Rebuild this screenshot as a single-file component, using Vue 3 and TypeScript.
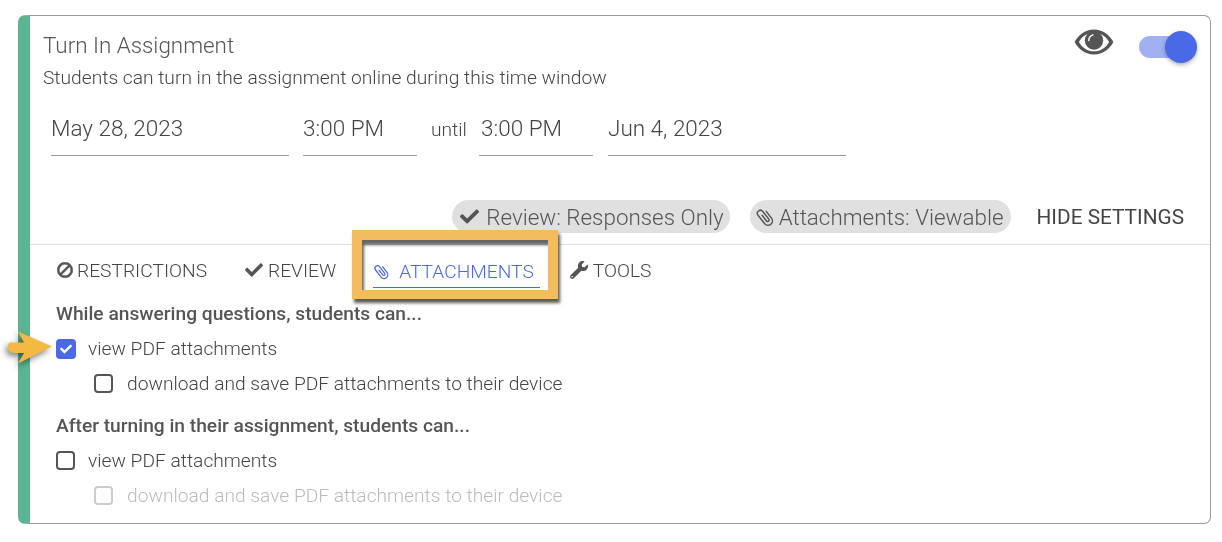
<script setup lang="ts">
import { ref } from 'vue'

type Icon = { box: string; d: string }

const icons: Record<string, Icon> = {
  check: {
    box: '0 0 512 512',
    d: 'M173.898 439.404l-166.4-166.4c-9.997-9.997-9.997-26.206 0-36.204l36.203-36.204c9.997-9.998 26.207-9.998 36.204 0L192 312.69 432.095 72.596c9.997-9.997 26.207-9.997 36.204 0l36.203 36.204c9.997 9.997 9.997 26.206 0 36.204l-294.4 294.401c-9.998 9.997-26.207 9.997-36.204-.001z'
  },
  ban: {
    box: '0 0 512 512',
    d: 'M256 8C119.034 8 8 119.033 8 256s111.034 248 248 248 248-111.034 248-248S392.967 8 256 8zm130.108 117.892c65.448 65.448 70 165.481 20.677 235.637L150.47 105.216c70.204-49.356 170.226-44.735 235.638 20.676zM125.892 386.108c-65.448-65.448-70-165.481-20.677-235.637L361.53 406.784c-70.203 49.356-170.226 44.736-235.638-20.676z'
  },
  wrench: {
    box: '0 0 512 512',
    d: 'M507.73 109.1c-2.24-9.03-13.54-12.09-20.12-5.51l-74.36 74.36-67.88-11.31-11.31-67.88 74.36-74.36c6.62-6.62 3.43-17.9-5.66-20.16-47.38-11.74-99.55.91-136.58 37.93-39.64 39.64-50.55 97.1-34.05 147.2L18.74 402.76c-24.99 24.99-24.99 65.51 0 90.5 24.99 24.99 65.51 24.99 90.5 0l213.21-213.21c50.12 16.71 107.47 5.68 147.37-34.22 37.07-37.07 49.7-89.32 37.91-136.73zM64 472c-13.25 0-24-10.75-24-24 0-13.26 10.75-24 24-24s24 10.74 24 24c0 13.25-10.75 24-24 24z'
  }
}

// the paperclip leans the other way and is thinner than the solid set, so it is stroked
const clipPath = 'M14.200 6.500V14.600a4.200 4.200 0 0 1-8.400 0V4.600a2.900 2.900 0 0 1 5.800 0V13.800a1.400 1.400 0 0 1-2.800 0V7'

const enabled = ref(true)
const tabs = [
  { label: 'RESTRICTIONS', icon: 'ban' },
  { label: 'REVIEW', icon: 'check' },
  { label: 'ATTACHMENTS', icon: 'clip', active: true },
  { label: 'TOOLS', icon: 'wrench' }
]
const chips = [
  { label: 'Review: Responses Only', icon: 'check' },
  { label: 'Attachments: Viewable', icon: 'clip' }
]
</script>

<template>
  <div class="page">
    <div class="card">
      <div class="top">
        <div class="head">
          <div>
            <h2 class="title">Turn In Assignment</h2>
            <p class="sub">Students can turn in the assignment online during this time window</p>
          </div>
          <div class="head-tools">
            <svg class="eye" viewBox="0 0 40 26">
              <path
                fill-rule="evenodd"
                d="M20 .5C11.500.5 4.600 5.600.6 13c4 7.400 10.900 12.500 19.400 12.500S35.400 20.400 39.400 13C35.400 5.600 28.500.5 20 .5zM20 22.300C13.600 22.300 8 18.900 4.900 13 8 7.100 13.600 3.700 20 3.700s12 3.400 15.100 9.300C32 18.900 26.400 22.300 20 22.300z"
              />
              <circle cx="20" cy="11.500" r="9.200" />
              <path d="M14.800 11.500c0-2.800 1.700-4.900 4.200-5.600" fill="none" stroke="#fff" stroke-width="1.500" stroke-linecap="round" />
            </svg>
            <button class="switch" type="button" @click="enabled = !enabled">
              <span class="knob"></span>
            </button>
          </div>
        </div>

        <div class="dates">
          <div class="field date">May 28, 2023</div>
          <div class="field time">3:00 PM</div>
          <span class="until">until</span>
          <div class="field time">3:00 PM</div>
          <div class="field date end">Jun 4, 2023</div>
        </div>

        <div class="summary">
          <span v-for="c in chips" :key="c.label" class="chip" :class="c.icon">
            <svg v-if="c.icon === 'clip'" class="ico" viewBox="0.500 0.500 19 19">
              <path class="clip-line" :d="clipPath" transform="rotate(-38 10 10)" />
            </svg>
            <svg v-else class="ico" :viewBox="icons[c.icon].box"><path :d="icons[c.icon].d" /></svg>
            {{ c.label }}
          </span>
          <span class="hide">HIDE SETTINGS</span>
        </div>
      </div>

      <div class="settings">
        <div class="tabs">
          <div v-for="t in tabs" :key="t.label" class="tab" :class="{ active: t.active }">
            <svg v-if="t.icon === 'clip'" class="ico" viewBox="0.500 0.500 19 19">
              <path class="clip-line" :d="clipPath" transform="rotate(-38 10 10)" />
            </svg>
            <svg v-else class="ico" :class="t.icon" :viewBox="icons[t.icon].box"><path :d="icons[t.icon].d" /></svg>
            <span>{{ t.label }}</span>
            <!-- callout drawn over the active tab -->
            <div v-if="t.active" class="callout"></div>
          </div>
        </div>

        <h4 class="group first">While answering questions, students can...</h4>
        <div class="check-row">
          <span class="box on">
            <svg viewBox="0 0 512 512"><path :d="icons.check.d" /></svg>
          </span>
          view PDF attachments
          <svg class="arrow" viewBox="0 0 48 34">
            <path d="M4.500 11.500H18L12 .5 46 15.500 12 32.500 18 22H8Q2 22 2 15.500 2 11.500 4.500 11.500z" />
          </svg>
        </div>
        <div class="check-row nested"><span class="box"></span>download and save PDF attachments to their device</div>

        <h4 class="group">After turning in their assignment, students can...</h4>
        <div class="check-row"><span class="box"></span>view PDF attachments</div>
        <div class="check-row nested off"><span class="box"></span>download and save PDF attachments to their device</div>
      </div>
    </div>
  </div>
</template>

<style scoped>
.page {
  width: 1222px;
  height: 542px;
  padding: 15px 11px 18px 18px;
  box-sizing: border-box;
  background: #fff;
  font-family: Roboto, "Liberation Sans", sans-serif;
  color: #555;
  overflow: hidden;
}
.card {
  height: 509px;
  box-sizing: border-box;
  border: 1px solid #999;
  border-left: 12px solid #5cb592;
  border-radius: 7px;
  opacity: 0.999;
}
.top {
  height: 229px;
  padding: 0 26px 0 13px;
  box-sizing: border-box;
  border-bottom: 1px solid #ddd;
  display: flex;
  flex-direction: column;
}
.head {
  display: flex;
  justify-content: space-between;
}
.title {
  margin: 14px 0 0;
  font-size: 22.400px;
  line-height: 30px;
  font-weight: 300;
  color: #555;
}
.sub {
  margin: 7px 0 0;
  font-size: 19.200px;
  line-height: 22px;
  font-weight: 300;
  color: #444;
}
.head-tools {
  display: flex;
  align-items: flex-start;
  margin-right: -6px;
}
.eye {
  width: 40px;
  height: 26px;
  margin-top: 13px;
  fill: #555;
}
.switch {
  position: relative;
  width: 51px;
  height: 22px;
  margin: 20px 0 0 25px;
  padding: 0;
  border: 0;
  border-radius: 11px;
  background: #a0b0f2;
}
.knob {
  position: absolute;
  right: -7px;
  top: -5px;
  width: 32px;
  height: 32px;
  border-radius: 50%;
  background: #4a69e6;
  box-shadow: 0 2px 4px rgba(0, 0, 0, 0.3);
}
.dates {
  display: flex;
  align-items: flex-end;
  margin-top: 20px;
  font-size: 22.500px;
  font-weight: 300;
}
.field {
  height: 47px;
  line-height: 38px;
  box-sizing: border-box;
  border-bottom: 1px solid #999;
  color: #444;
}
.date {
  width: 238px;
  margin-left: 8px;
}
.date.end {
  margin-left: 15px;
}
.time {
  width: 114px;
  margin-left: 14px;
}
.until {
  width: 48px;
  height: 47px;
  margin-left: 14px;
  font-size: 19.200px;
  line-height: 42px;
  color: #444;
}
.until + .time {
  margin-left: 0;
  padding-left: 2px;
}
.summary {
  display: flex;
  align-items: center;
  justify-content: flex-end;
  margin-top: 44px;
  font-size: 22.400px;
  font-weight: 300;
}
.chip {
  display: inline-flex;
  align-items: center;
  height: 33px;
  padding: 0 6px 0 8px;
  gap: 7px;
  margin-right: 20px;
  border-radius: 17px;
  background: #e0e0e0;
  white-space: nowrap;
}
.chip .ico {
  width: 19px;
  height: 19px;
  fill: #555;
  stroke: #555;
}
.chip.clip {
  padding: 0 7px 0 5px;
  gap: 4px;
}
.chip.clip .ico {
  width: 20px;
  height: 20px;
  fill: none;
}
.hide {
  margin-left: 6px;
  font-size: 20.800px;
  font-weight: 400;
  color: #444;
}
.settings {
  padding-left: 26px;
}
.tabs {
  display: flex;
  height: 50px;
  align-items: flex-start;
  font-size: 19.200px;
  font-weight: 300;
}
.tab {
  position: relative;
  display: flex;
  align-items: center;
  gap: 5px;
  height: 26px;
  margin-top: 12px;
  color: #444;
  white-space: nowrap;
}
.tab .ico {
  width: 18px;
  height: 18px;
  fill: #555;
}
.tab .ico.ban {
  width: 16px;
  height: 16px;
  margin: 0 -1px 0 1px;
  transform: scaleX(-1);
  stroke: #555;
  stroke-width: 18;
}
.tab:nth-child(2) {
  margin-left: 38px;
}
.tab.active {
  margin-left: 37px;
  height: 28px;
  padding: 0 6px 2px 0;
  gap: 8px;
  color: #4a69e6;
  border-bottom: 1px solid #4a69e6;
}
.tab.active .ico {
  width: 17px;
  height: 17px;
  margin-right: 1px;
  fill: none;
  stroke: #4a69e6;
}
.tab:last-child {
  margin-left: 30px;
}
.clip-line {
  fill: none;
  stroke-width: 1.400;
  stroke-linecap: round;
  stroke-linejoin: round;
}
.callout {
  position: absolute;
  left: -21px;
  top: -27px;
  width: 206px;
  height: 69px;
  box-sizing: border-box;
  border: 10px solid #f3bc5e;
  border-bottom-width: 9px;
  box-shadow: 2px 4px 3px rgba(0, 0, 0, 0.65), inset 2px 5px 3px rgba(0, 0, 0, 0.6);
  pointer-events: none;
}
.group {
  margin: 0;
  font-size: 19.200px;
  line-height: 24px;
  font-weight: 500;
  color: #555;
}
.group.first {
  margin-top: 7px;
}
.check-row {
  position: relative;
  display: flex;
  align-items: center;
  gap: 13px;
  height: 35px;
  font-size: 19.200px;
  font-weight: 300;
  color: #444;
}
.group + .check-row {
  margin-top: 5px;
}
.check-row + .group {
  margin-top: 12.500px;
}
.nested {
  padding-left: 38px;
  gap: 14px;
}
.off {
  color: #bbb;
}
.box {
  flex: none;
  display: flex;
  align-items: center;
  justify-content: center;
  width: 19px;
  height: 19px;
  border: 2px solid #555;
  border-radius: 4px;
  box-sizing: border-box;
}
.off .box {
  border-color: #ccc;
}
.box.on {
  width: 20px;
  height: 20px;
  margin-right: -1px;
  border-color: #4a69e6;
  background: #4a69e6;
}
.box.on svg {
  width: 12px;
  height: 12px;
  fill: #fff;
}
.arrow {
  position: absolute;
  left: -50px;
  top: 0;
  width: 48px;
  height: 34px;
  fill: #f4b942;
  filter: drop-shadow(-2px 3px 3px rgba(0, 0, 0, 0.5));
}
</style>

<style>
body {
  background: #fff;
}
</style>
